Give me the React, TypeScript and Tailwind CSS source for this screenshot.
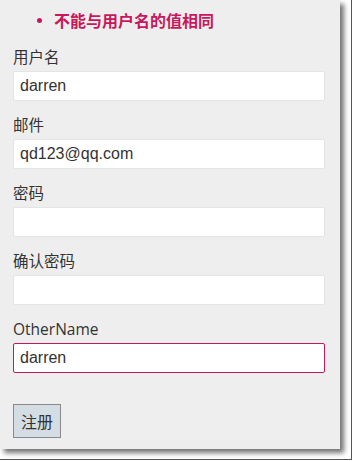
import React from "react";

const fields = [
  { label: "用户名", value: "darren" },
  { label: "邮件", value: "qd123@qq.com" },
  { label: "密码", value: "" },
  { label: "确认密码", value: "" },
  { label: "OtherName", value: "darren", invalid: true },
];

export default function App() {
  return (
    <div className="w-[353px] h-[461px] bg-white">
      <div className="w-[352px] h-[460px] border-r border-b border-[#555]">
        <div
          className="w-[340px] h-[449px] bg-[#eeeeee] shadow-[4px_4px_5px_rgba(0,0,0,0.55)] pl-[13px] pt-[10px]"
          style={{ fontFamily: '"Noto Sans CJK SC", sans-serif' }}
        >
          <div className="flex items-center h-[20px]">
            <span className="ml-[24px] w-[5px] h-[5px] rounded-full bg-[#c8175a]" />
            <span className="ml-[12px] text-[16px] leading-[20px] font-bold text-[#c8175a]">
              不能与用户名的值相同
            </span>
          </div>

          <div className="mt-[17px] flex flex-col gap-[14px] w-[312px]">
            {fields.map((f) => (
              <div key={f.label} className="flex flex-col gap-[4px]">
                <label
                  className="text-[15.5px] leading-[20px] text-[#333]"
                  style={{ fontFamily: '"Open Sans", "Noto Sans CJK SC", sans-serif' }}
                >
                  {f.label}
                </label>
                <input
                  readOnly
                  defaultValue={f.value}
                  className={`h-[30px] w-full bg-white px-[6px] text-[16px] text-[#333] rounded-[2px] outline-none border ${
                    f.invalid ? "border-[#c8175a]" : "border-[#e4e4e4]"
                  }`}
                  style={{ fontFamily: '"Liberation Sans", Arial, sans-serif' }}
                />
              </div>
            ))}
          </div>

          <button className="mt-[31px] w-[48px] h-[34px] bg-[#d3dde3] border border-[#8a8a8a] text-[16px] text-[#333]">
            注册
          </button>
        </div>
      </div>
    </div>
  );
}
